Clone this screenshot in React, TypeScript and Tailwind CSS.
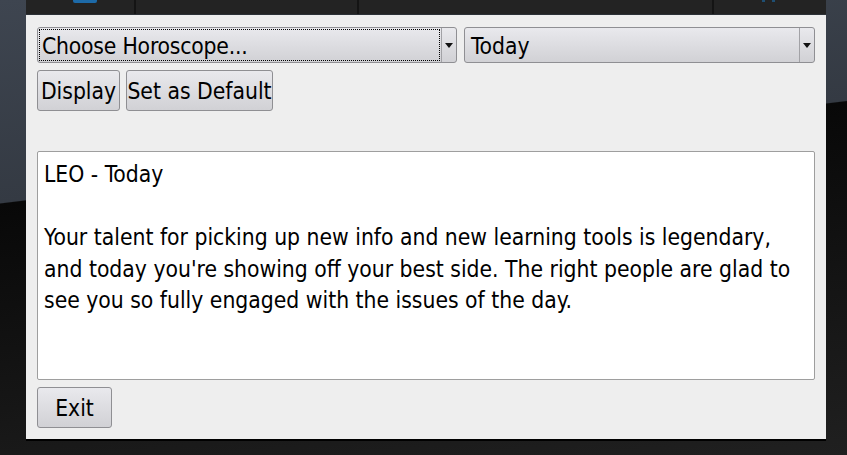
import React from 'react';

const font = "font-['DejaVu_Sans_Condensed','DejaVu_Sans',sans-serif]";

const Arrow = () => (
  <svg width="8" height="5" viewBox="0 0 8 5" className="block">
    <path d="M0 0h8L4 5z" fill="#111" />
  </svg>
);

const Combo = ({ label, width, focused }: { label: string; width: string; focused?: boolean }) => (
  <div
    className={`${width} h-full flex rounded-[3px] border border-[#8f8f93] bg-gradient-to-b from-[#e9e9ed] to-[#d1d1d5]`}
  >
    <div className="flex-1 p-px">
      <div
        className={`h-full flex items-center pt-[2px] ${
          focused ? 'pl-[2px] border border-dotted border-black tracking-[-0.2px]' : 'pl-[5px]'
        }`}
      >
        {label}
      </div>
    </div>
    <div className="w-[15px] border-l border-[#a2a2a6] flex items-center justify-center">
      <Arrow />
    </div>
  </div>
);

const Button = ({ label, width }: { label: string; width: string }) => (
  <button
    className={`${width} h-[41px] pt-[2px] rounded-[3px] border border-[#8f8f93] bg-gradient-to-b from-[#e9e9ed] to-[#d1d1d5] flex items-center justify-center text-black`}
  >
    {label}
  </button>
);

export default function App() {
  return (
    <div
      className={`w-[847px] h-[455px] overflow-hidden bg-[linear-gradient(173.1deg,#3e4550_0%,#343a43_36.4%,#080808_36.6%,#111111_60%,#202020_100%)] ${font} text-[22.7px] text-black`}
    >
      <div className="ml-[26px] w-[800px] h-[441px] flex flex-col border-b-2 border-black">
        {/* top bar */}
        <div className="h-[15px] flex bg-[#232323] border-b border-[#2c3137]">
          <div className="w-[110px] relative border-r-2 border-[#141414]">
            <div className="absolute left-[47px] top-0 w-[24px] h-[3px] bg-[#1d6aa8] rounded-b-[2px]" />
          </div>
          <div className="w-[223px] border-r-2 border-[#141414]" />
          <div className="w-[355px] border-r-2 border-[#141414]" />
          <div className="flex-1 relative">
            <div className="absolute left-[48px] top-0 w-[3px] h-[2px] bg-[#1f4f73]" />
            <div className="absolute left-[58px] top-0 w-[3px] h-[2px] bg-[#1f4f73]" />
          </div>
        </div>

        {/* panel */}
        <div className="flex-1 bg-[#eeeeee] pl-[11px] pt-[12px]">
          <div className="flex gap-[7px] h-[36px]">
            <Combo label="Choose Horoscope..." width="w-[420px]" focused />
            <Combo label="Today" width="w-[351px]" />
          </div>

          <div className="flex gap-[6px] mt-[7px]">
            <Button label="Display" width="w-[83px]" />
            <Button label="Set as Default" width="w-[147px]" />
          </div>

          <div className="mt-[40px] w-[778px] h-[229px] bg-white border border-[#9e9e9e] rounded-[2px] pl-[6px] pr-[8px] pt-[7px] leading-[31.5px]">
            <p>LEO - Today</p>
            <p className="mt-[31.5px]">
              Your talent for picking up new info and new learning tools is legendary,
              and today you're showing off your best side. The right people are glad to
              see you so fully engaged with the issues of the day.
            </p>
          </div>

          <div className="mt-[7px]">
            <Button label="Exit" width="w-[75px]" />
          </div>
        </div>
      </div>
    </div>
  );
}
